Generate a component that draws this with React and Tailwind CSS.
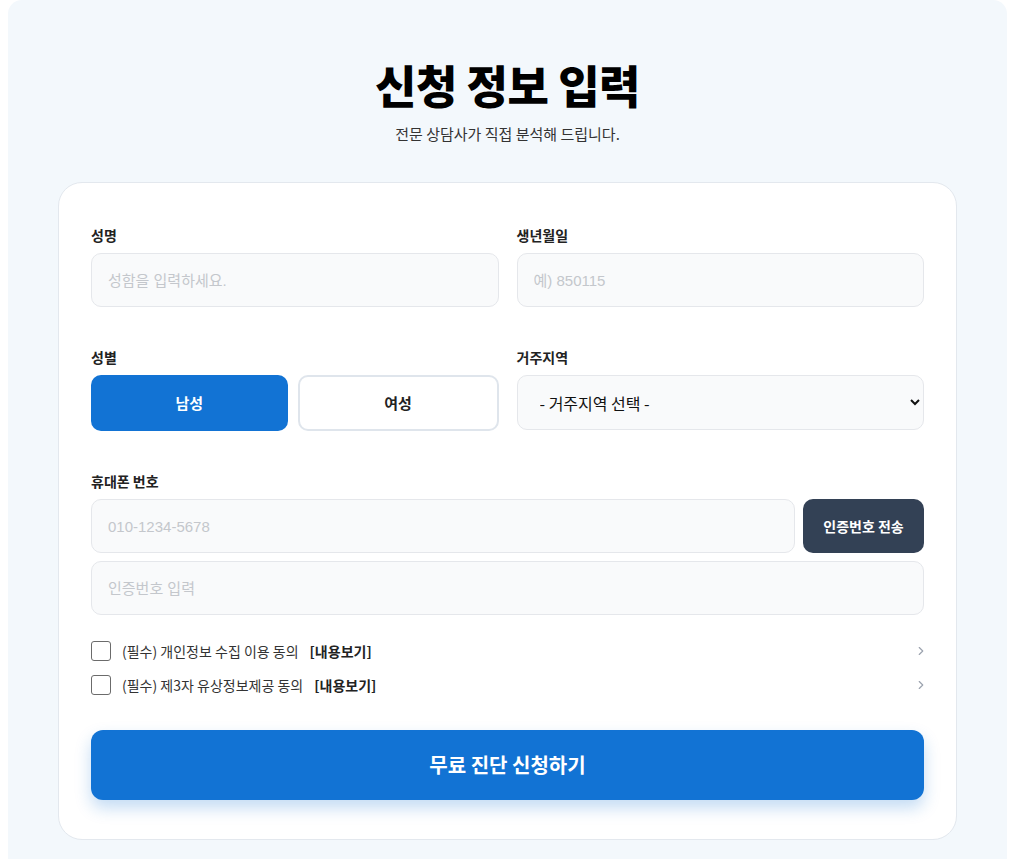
import { ChevronRight } from 'lucide-react';

const font = { fontFamily: '"Noto Sans CJK KR", "Noto Sans", sans-serif' };

function Label({ children }) {
  return <label className="block mb-2 text-[14px] leading-5 font-bold text-[#222]">{children}</label>;
}

function Field({ placeholder, className = '' }) {
  return (
    <input
      type="text"
      placeholder={placeholder}
      className={`h-[54px] w-full rounded-[10px] border border-[#e5e7eb] bg-[#f9fafb] px-4 text-[15px] text-[#222] placeholder:text-[#c4c7cc] outline-none ${className}`}
      style={{ fontFamily: '"Liberation Sans", "Noto Sans CJK KR", sans-serif' }}
    />
  );
}

function Agree({ text }) {
  return (
    <div className="flex items-center h-5">
      <span className="w-5 h-5 rounded-[3px] border border-[#6b6b6b] bg-white shrink-0" />
      <span className="ml-[11px] text-[14px] text-[#333]">{text}</span>
      <span className="ml-[11px] text-[14px] font-bold text-[#222]">[내용보기]</span>
      <ChevronRight className="ml-auto -mr-[4px] w-[14px] h-[14px] text-[#9ca3af]" strokeWidth={2} />
    </div>
  );
}

export default function App() {
  return (
    <div className="min-h-[859px] bg-white" style={font}>
      <div className="ml-2 mr-3 min-h-[859px] rounded-t-[14px] bg-[#f3f8fc] pt-[59px] pb-[19px]">
        <h1 className="text-center text-[45px] leading-[52px] font-black text-black tracking-[-0.5px]">신청 정보 입력</h1>
        <p className="mt-[12px] text-center text-[15px] leading-[22px] text-[#333]">전문 상담사가 직접 분석해 드립니다.</p>

        <div className="mt-[37px] mx-auto w-[899px] rounded-[24px] border border-[#e3e8ee] bg-white px-8 pt-[42px] pb-[39px]">
          <div className="grid grid-cols-2 gap-x-[18px]">
            <div>
              <Label>성명</Label>
              <Field placeholder="성함을 입력하세요." />
            </div>
            <div>
              <Label>생년월일</Label>
              <Field placeholder="예) 850115" />
            </div>
          </div>

          <div className="mt-10 grid grid-cols-2 gap-x-[18px]">
            <div>
              <Label>성별</Label>
              <div className="flex gap-[10px]">
                <button className="flex-1 h-[56px] rounded-[10px] bg-[#1273d4] text-white text-[15px] font-bold">남성</button>
                <button className="flex-1 h-[56px] rounded-[10px] border-2 border-[#dfe5ec] bg-white text-[#222] text-[15px] font-bold">여성</button>
              </div>
            </div>
            <div>
              <Label>거주지역</Label>
              <select
                className="h-[55px] w-full rounded-[10px] border border-[#e5e7eb] bg-[#f9fafb] px-[18px] text-[16px] text-[#111] outline-none"
                style={{ fontFamily: '"Noto Sans CJK KR", sans-serif' }}
                defaultValue=""
              >
                <option value="">- 거주지역 선택 -</option>
                <option>서울</option>
                <option>경기</option>
              </select>
            </div>
          </div>

          <div className="mt-10">
            <Label>휴대폰 번호</Label>
            <div className="flex gap-2">
              <Field placeholder="010-1234-5678" className="flex-1" />
              <button className="w-[121px] h-[54px] shrink-0 rounded-[10px] bg-[#334155] text-white text-[14px] font-semibold">인증번호 전송</button>
            </div>
            <Field placeholder="인증번호 입력" className="mt-2" />
          </div>

          <div className="mt-[26px] flex flex-col gap-[14px]">
            <Agree text="(필수) 개인정보 수집 이용 동의" />
            <Agree text="(필수) 제3자 유상정보제공 동의" />
          </div>

          <button className="mt-[35px] w-full h-[70px] rounded-[12px] bg-[#1273d4] text-white text-[20px] font-bold shadow-[0_8px_16px_rgba(18,115,212,0.25)]">
            무료 진단 신청하기
          </button>
        </div>
      </div>
    </div>
  );
}
